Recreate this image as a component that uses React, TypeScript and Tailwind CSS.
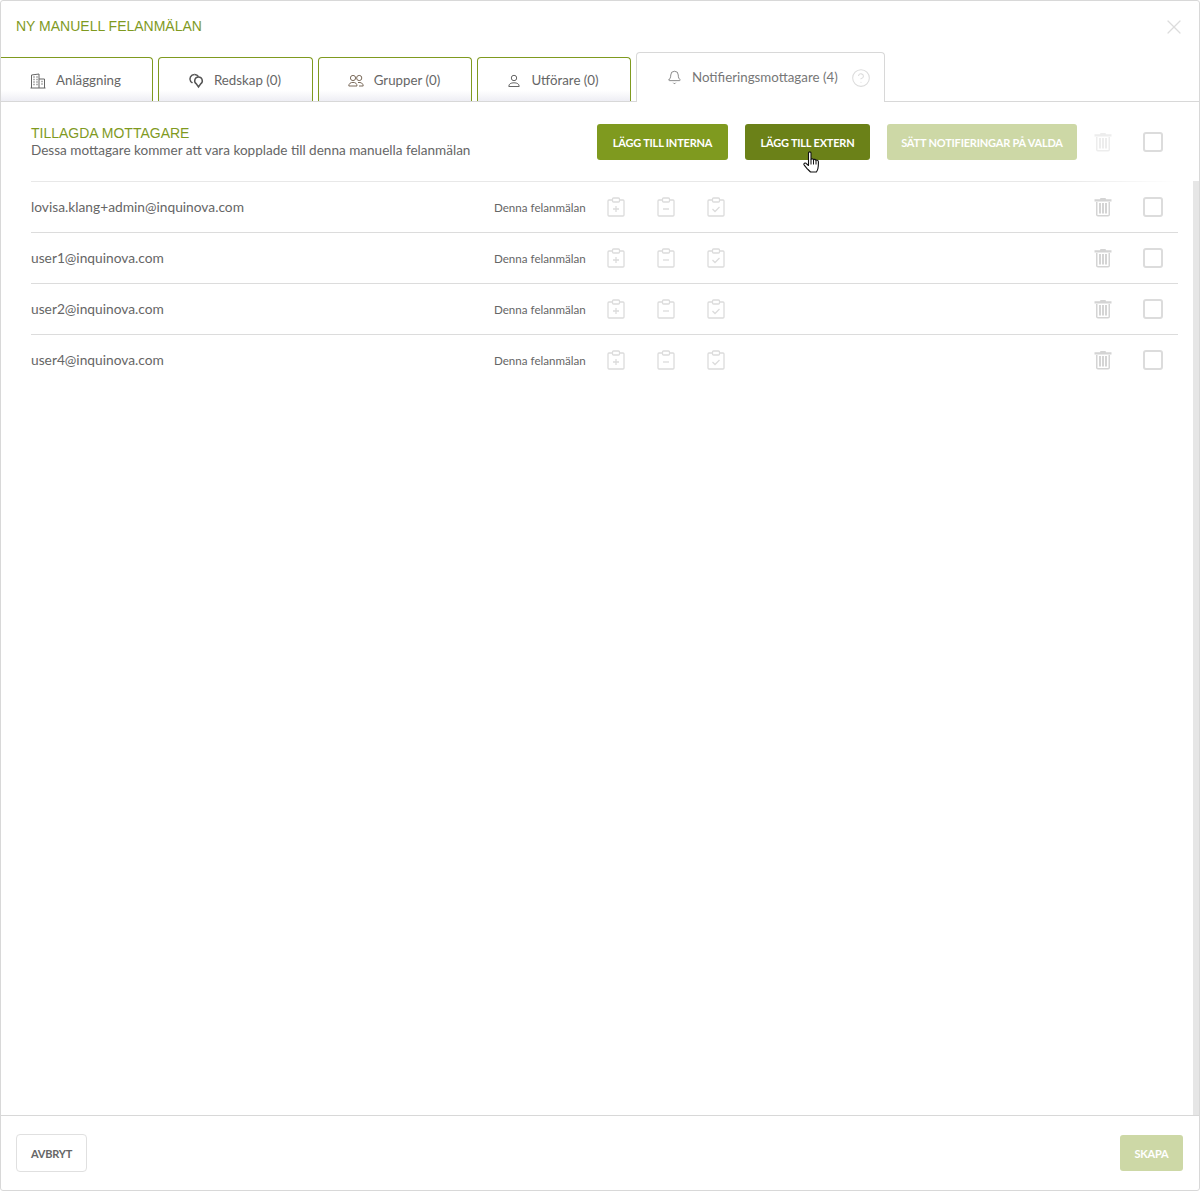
import { Bell, CircleHelp, X } from "lucide-react";

const bodyFont = "font-['Lato',sans-serif]";

const recipients = [
  "lovisa.klang+admin@inquinova.com",
  "user1@inquinova.com",
  "user2@inquinova.com",
  "user4@inquinova.com",
];

const BuildingIcon = () => (
  <svg width="16" height="16" viewBox="0 0 16 16" fill="none" stroke="#666" strokeWidth="1">
    <path d="M1.500 15V2l7.500-1V15M9 6H14.500V15M0.500 15H15.500" />
    <path d="M3.500 4h1M6.500 4h1M3.500 6.500h1M6.500 6.500h1M3.500 9h1M6.500 9h1M3.500 11.500h1M6.500 11.500h1M11.500 8.500h1M11.500 11h1" strokeWidth="1.500" />
  </svg>
);

const PinsIcon = () => (
  <svg width="16" height="16" viewBox="0 0 16 16" fill="none" stroke="#555" strokeWidth="1.500">
    <path d="M6.500 1.500a4.500 4.500 0 0 0-3.800 7l1.800 1.500" />
    <path d="M6.500 1.500a4.500 4.500 0 0 1 4 2.200" />
    <path d="M10.500 4a3.800 3.800 0 0 0-2.200 6.900l2.200 3.100 2.200-3.100A3.800 3.800 0 0 0 10.500 4z" />
  </svg>
);

const GroupIcon = () => (
  <svg width="16" height="16" viewBox="0 0 16 16" fill="none" stroke="#7a6a5a" strokeWidth="1">
    <circle cx="5" cy="5" r="2.600" />
    <circle cx="11.200" cy="5" r="2.600" />
    <path d="M0.800 13c0-2.500 1.800-3.600 4.200-3.600S9 10.500 9 13zM10 9.500c2.800-.4 5.200.7 5.200 3.500H11" />
  </svg>
);

const PersonIcon = () => (
  <svg width="14" height="14" viewBox="0 0 14 14" fill="none" stroke="#666" strokeWidth="1">
    <circle cx="7" cy="4" r="2.700" />
    <path d="M1.800 12.500c0-2.600 2-3.700 5.200-3.700s5.200 1.100 5.200 3.700z" />
  </svg>
);

const ClipboardIcon = ({ mark }: { mark: "plus" | "minus" | "check" }) => (
  <svg width="20" height="20" viewBox="0 0 20 20" fill="none" stroke="#dcdcdc" strokeWidth="1.300">
    <path d="M6.500 3H3a1 1 0 0 0-1 1v14a1 1 0 0 0 1 1h14a1 1 0 0 0 1-1V4a1 1 0 0 0-1-1h-3.500" />
    <rect x="6.500" y="1" width="7" height="4" rx="1" />
    {mark === "plus" && <path d="M7 12h6M10 9v6" />}
    {mark === "minus" && <path d="M7 12h6" />}
    {mark === "check" && <path d="M6.500 12l2.500 2.500 4.500-4.500" />}
  </svg>
);

const TrashIcon = ({ faded }: { faded?: boolean }) => (
  <svg width="18" height="20" viewBox="0 0 18 20" className={faded ? "opacity-40" : ""}>
    <path d="M6.500 1h5l.6 1.200H17.500V4.500H.5V2.200h5.400z" fill="#d4d4d4" />
    <path d="M2 5H16V17.500a2 2 0 0 1-2 2H4a2 2 0 0 1-2-2z" fill="#d4d4d4" />
    <path d="M3.500 5h11v13h-11z" fill="#fff" />
    <path d="M5 6h2v10.500H5zM8 6h2v10.500H8zM11 6h2v10.500h-2z" fill="#d4d4d4" />
  </svg>
);

const HandCursor = () => (
  <svg width="18" height="24" viewBox="0 0 18 24" className="absolute left-[802px] top-[150px]">
    <path
      d="M5.500 2c0-1.500 2.500-1.500 2.500 0v6.500c.5-1 2.400-.9 2.500.4.500-.9 2.300-.7 2.400.6.600-.7 2.400-.5 2.500 1.200 0 3 .1 5-.5 7-.5 1.800-1.500 3.300-1.500 3.300H7.500S6.500 20 5 18.500C3.700 17 1.500 14.800 1 13.800c-.5-1.300 1-2.300 2-1.500l2.500 2.200z"
      fill="#fff"
      stroke="#111"
      strokeWidth="1.100"
      strokeLinejoin="round"
    />
    <path d="M8 8.500v5M10.500 9v4.500M13 9.800v3.700" stroke="#111" strokeWidth="1" fill="none" />
  </svg>
);

const Tab = ({ icon, label, width, first }: { icon: React.ReactNode; label: string; width: string; first?: boolean }) => (
  <div
    className={`${width} h-[44px] flex items-center justify-center gap-[10px] border border-b-0 border-[#7f9a1f] rounded-t-[4px] bg-gradient-to-b from-white from-75% to-[#eeeef4] text-[13.3px] text-[#666] pt-[2px] pr-[2px] ${first ? "border-l-0 rounded-tl-none" : ""}`}
  >
    {icon}
    <span>{label}</span>
  </div>
);

export default function App() {
  return (
    <div className={`${bodyFont} relative w-[1200px] h-[1191px] bg-white border border-[#d8d8d8] rounded-[3px] flex flex-col overflow-hidden`}>
      <div className="h-[51px] shrink-0 flex items-center justify-between pl-[15px] pr-[13px]">
        <h1 className="font-['Liberation_Sans',sans-serif] text-[14px] text-[#7f9a1f] uppercase">Ny manuell felanmälan</h1>
        <X size={24} strokeWidth={1.200} className="text-[#dcdcdc]" />
      </div>

      <div className="h-[50px] shrink-0 flex items-end gap-[5px] border-b border-[#d8d8d8]">
        <Tab first width="w-[152px]" icon={<BuildingIcon />} label="Anläggning" />
        <Tab width="w-[155px]" icon={<PinsIcon />} label="Redskap (0)" />
        <Tab width="w-[154px]" icon={<GroupIcon />} label="Grupper (0)" />
        <Tab width="w-[154px]" icon={<PersonIcon />} label="Utförare (0)" />
        <div className="w-[249px] h-[50px] -mb-px flex items-center gap-[10px] pl-[30px] bg-white border border-b-0 border-[#d8d8d8] rounded-t-[4px] text-[13.3px] text-[#777]">
          <Bell size={15} strokeWidth={1.200} className="text-[#666]" />
          <span>Notifieringsmottagare (4)</span>
          <CircleHelp size={20} strokeWidth={1.300} className="text-[#dcdcdc] ml-[3px]" />
        </div>
      </div>

      <div className="h-[79px] shrink-0 flex items-start pl-[30px] pr-[36px] pt-[22px]">
        <div className="flex-1 pt-[1px]">
          <h2 className="font-['Liberation_Sans',sans-serif] text-[14px] leading-[16px] text-[#7f9a1f] uppercase">Tillagda mottagare</h2>
          <p className="text-[13.55px] leading-[18px] text-[#666]">Dessa mottagare kommer att vara kopplade till denna manuella felanmälan</p>
        </div>
        <button className="h-[36px] w-[131px] pt-[2px] rounded-[3px] bg-[#7f9a1f] text-white text-[11px] tracking-[-0.2px] font-bold uppercase">Lägg till interna</button>
        <button className="h-[36px] w-[125px] pt-[2px] ml-[17px] rounded-[3px] bg-[#6b8118] text-white text-[11px] tracking-[-0.2px] font-bold uppercase">Lägg till extern</button>
        <button className="h-[36px] w-[190px] pt-[2px] ml-[17px] rounded-[3px] bg-[#cdd8a6] text-white text-[11px] tracking-[-0.2px] font-bold uppercase">Sätt notifieringar på valda</button>
        <div className="ml-[17px] mt-[8px]">
          <TrashIcon faded />
        </div>
        <div className="ml-[31px] mt-[8px] w-[20px] h-[20px] border-2 border-[#dcdcdc] rounded-[3px]" />
      </div>

      <div className="flex-1 flex min-h-0">
        <div className="flex-1 pl-[30px] pr-[15px]">
          <div className="h-px bg-gradient-to-r from-[#e8e8e8] from-90% to-white" />
          {recipients.map((email, index) => (
            <div
              key={email}
              className={`h-[51px] flex items-center pr-[15px] border-b ${index < recipients.length - 1 ? "border-[#dcdcdc]" : "border-transparent"}`}
            >
              <span className="w-[463px] text-[13.75px] text-[#666]">{email}</span>
              <span className="w-[92px] text-[11.6px] whitespace-nowrap text-[#666] pt-[1px]">Denna felanmälan</span>
              <div className="ml-[20px] flex gap-[30px]">
                <ClipboardIcon mark="plus" />
                <ClipboardIcon mark="minus" />
                <ClipboardIcon mark="check" />
              </div>
              <div className="flex-1" />
              <TrashIcon />
              <div className="ml-[31px] w-[20px] h-[20px] border-2 border-[#dcdcdc] rounded-[3px]" />
            </div>
          ))}
        </div>
        <div className="w-[6px] shrink-0 bg-[#e6e6e6]" />
      </div>

      <div className="h-[75px] shrink-0 flex items-center justify-between border-t border-[#d8d8d8] pl-[15px] pr-[16px]">
        <button className="h-[38px] w-[71px] pt-[2px] border border-[#e0e0e0] rounded-[4px] bg-white text-[#666] text-[11px] tracking-[-0.2px] font-bold">AVBRYT</button>
        <button className="h-[36px] w-[63px] pt-[2px] rounded-[3px] bg-[#cdd8a6] text-white text-[11px] tracking-[-0.2px] font-bold">SKAPA</button>
      </div>

      <HandCursor />
    </div>
  );
}
